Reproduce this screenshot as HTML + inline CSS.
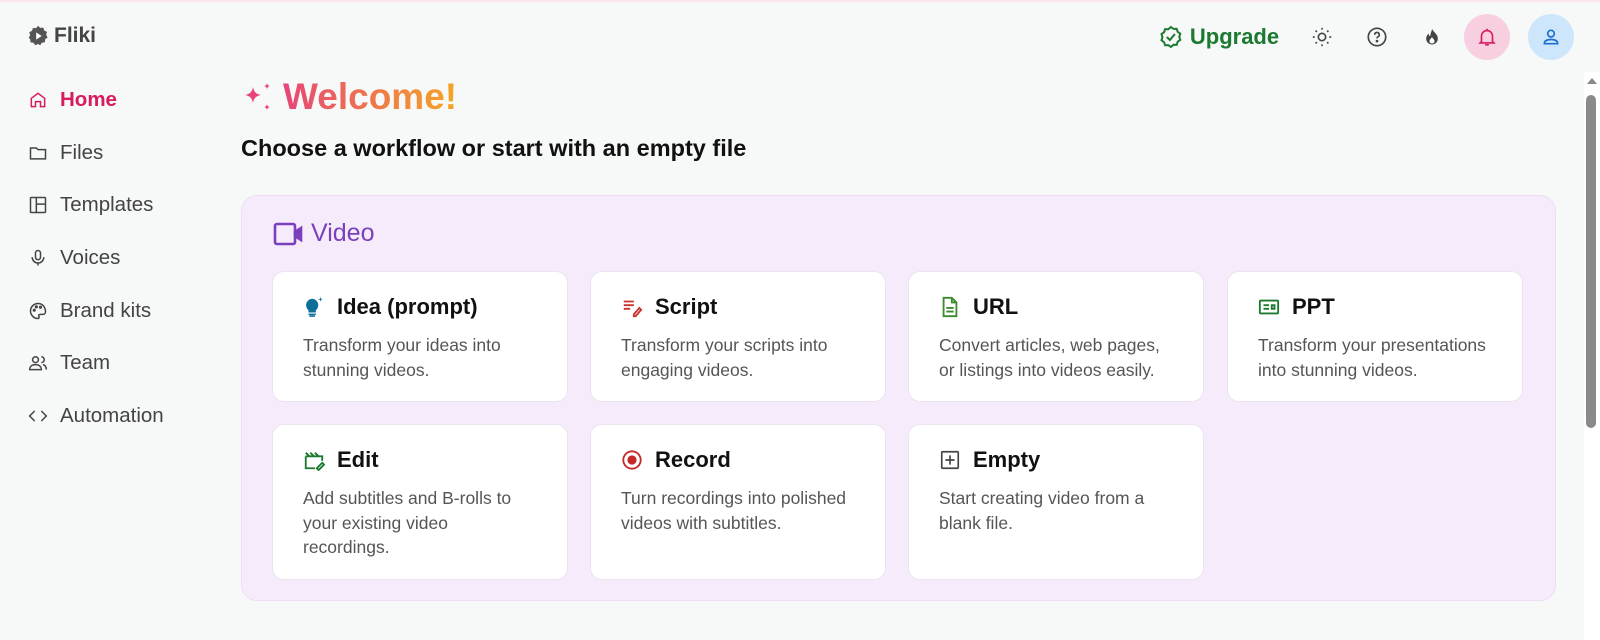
<!DOCTYPE html>
<html><head><style>
*{box-sizing:border-box;margin:0;padding:0}
body{width:1600px;height:640px;background:#f7f8f8;font-family:"Liberation Sans",sans-serif;position:relative;overflow:hidden;color:#222}
.topline{position:absolute;top:0;left:0;right:0;height:2px;background:#fbe4ee}
.logo{position:absolute;left:27px;top:24px;font-size:21px;font-weight:bold;color:#444;display:flex;align-items:center;gap:5px}
.nav{position:absolute;left:28px;top:74px}
.nav div{height:52.6px;display:flex;align-items:center;gap:12px;font-size:20.5px;color:#444}
.nav div.act{color:#d81b60;font-weight:bold}
.nav svg{width:20px;height:20px;fill:none;stroke:currentColor;stroke-width:1.8}
.welcome{position:absolute;left:243px;top:76px;display:flex;align-items:center;gap:8px;font-size:37px;font-weight:bold}
.welcome span{background:linear-gradient(90deg,#e64677,#f5a623);-webkit-background-clip:text;color:transparent}
.sub{position:absolute;left:241px;top:135px;font-size:23.5px;font-weight:bold;color:#111}
.panel{position:absolute;left:241px;top:195px;width:1315px;height:406px;background:#f5ebfb;border:1px solid #ecdff5;border-radius:16px}
.vt{position:absolute;left:273px;top:219px;font-size:25px;color:#7b3fbd;display:flex;align-items:center;gap:8px}
.card{position:absolute;width:296px;background:#fff;border:1px solid #ebe4ef;border-radius:12px;padding:22px 30px}
.card h3{font-size:22px;font-weight:bold;color:#111;display:flex;align-items:center;gap:12px;margin-bottom:13px}
.card p{font-size:17.5px;color:#555;line-height:24.5px}
.card svg{width:22px;height:22px;flex:none}
.top{position:absolute;top:37px;transform:translate(-50%,-50%);display:flex;align-items:center;justify-content:center}
.circ{width:46px;height:46px;border-radius:50%}
</style></head><body>
<div class="topline"></div>
<div class="logo"><svg width="22" height="22" viewBox="0 0 24 24"><path d="M12 1l2.5 2.2 3.3-.4 1 3.2 3 1.5-.9 3.2 1.6 2.9-2.7 1.9-.3 3.3-3.3.5-1.8 2.8-2.4-1.4-3 1.4-1.9-2.8-3.3-.4-.3-3.3L1.9 14l1.5-3L2.5 7.8l3-1.5 1-3.2 3.3.5z" fill="#555"/><path d="M10 8v8l6-4z" fill="#fff"/></svg>Fliki</div>
<div class="nav">
<div class="act"><svg viewBox="0 0 24 24"><path d="M4 10l8-6 8 6v10h-5v-6h-6v6H4z"/></svg>Home</div>
<div><svg viewBox="0 0 24 24"><path d="M3 6h7l2 2h9v11H3z"/></svg>Files</div>
<div><svg viewBox="0 0 24 24"><rect x="3" y="3" width="18" height="18" rx="1"/><path d="M10 3v18M10 11h11"/></svg>Templates</div>
<div><svg viewBox="0 0 24 24"><rect x="9" y="3" width="6" height="11" rx="3"/><path d="M5 11a7 7 0 0014 0M12 18v3"/></svg>Voices</div>
<div><svg viewBox="0 0 24 24"><path d="M12 3a9 9 0 000 18c1.5 0 1.5-2 1-3s0-2 2-2h3a3 3 0 003-3c0-6-4-10-9-10z"/><circle cx="7.5" cy="11" r="1"/><circle cx="10" cy="7" r="1"/><circle cx="15" cy="7.5" r="1"/></svg>Brand kits</div>
<div><svg viewBox="0 0 24 24"><circle cx="9" cy="8" r="3.5"/><path d="M2 20c0-4 3-6 7-6s7 2 7 6zM16 4.5a3.5 3.5 0 010 7M18 14c2.5.5 4 2.5 4 6"/></svg>Team</div>
<div><svg viewBox="0 0 24 24"><path d="M8 6l-6 6 6 6M16 6l6 6-6 6"/></svg>Automation</div>
</div>
<div class="top" style="left:1219px;font-size:22px;font-weight:bold;color:#1b7a2f;gap:7px"><svg width="24" height="24" viewBox="0 0 24 24" fill="none" stroke="#1b7a2f" stroke-width="2"><path d="M12 2l2.6 1.9 3.2-.1 1 3 2.6 1.9-1 3.1 1 3.1-2.6 1.9-1 3-3.2-.1L12 22l-2.6-1.9-3.2.1-1-3-2.6-1.9 1-3.1-1-3.1 2.6-1.9 1-3 3.2.1z"/><path d="M8 12l3 3 5-6"/></svg>Upgrade</div>
<div class="top" style="left:1322px"><svg width="22" height="22" viewBox="0 0 24 24" fill="none" stroke="#444" stroke-width="1.8"><circle cx="12" cy="12" r="4"/><path d="M12 2v2M12 20v2M2 12h2M20 12h2M5 5l1.4 1.4M17.6 17.6L19 19M5 19l1.4-1.4M17.6 6.4L19 5"/></svg></div>
<div class="top" style="left:1377px"><svg width="22" height="22" viewBox="0 0 24 24" fill="none" stroke="#444" stroke-width="1.8"><circle cx="12" cy="12" r="9.5"/><path d="M9.5 9.5a2.5 2.5 0 113.5 2.3c-.8.4-1 1-1 1.7"/><circle cx="12" cy="16.5" r=".6" fill="#444"/></svg></div>
<div class="top" style="left:1432px"><svg width="20" height="22" viewBox="0 0 24 24"><path d="M12 2c1 4 7 6 7 12a7 7 0 01-14 0c0-3 2-5 3-6 0 2 1 3 2 3 0-4 2-6 2-9z" fill="#444"/><path d="M12 20a3 3 0 01-3-3c0-2 2-3 3-5 1 2 3 3 3 5a3 3 0 01-3 3z" fill="#fff"/></svg></div>
<div class="top circ" style="left:1487px;background:#f8cfe0"><svg width="22" height="22" viewBox="0 0 24 24" fill="none" stroke="#d81b60" stroke-width="1.8"><path d="M6 17V11a6 6 0 0112 0v6l1.5 1.5h-15zM10 20.5h4M12 3v2"/></svg></div>
<div class="top circ" style="left:1551px;background:#cde6fb"><svg width="20" height="20" viewBox="0 0 24 24" fill="none" stroke="#1a6fd1" stroke-width="2"><circle cx="12" cy="8" r="4"/><path d="M4 20c0-4 4-5 8-5s8 1 8 5z"/></svg></div>
<div style="position:absolute;left:1584px;top:72px;width:16px;height:568px;background:#fff"></div>
<div style="position:absolute;left:1587px;top:78px;border:5px solid transparent;border-bottom:6px solid #888;border-top:0"></div>
<div style="position:absolute;left:1586px;top:95px;width:10px;height:333px;background:#8a8a8a;border-radius:5px"></div>

<div class="welcome"><svg width="32" height="32" viewBox="0 0 32 32"><path d="M10 6c1 5 3 7 8 8-5 1-7 3-8 8-1-5-3-7-8-8 5-1 7-3 8-8z" fill="#e8437a"/><path d="M24 2c.4 2 1.2 2.8 3 3-1.8.4-2.6 1.2-3 3-.4-1.8-1.2-2.6-3-3 1.8-.2 2.6-1 3-3zM24 23c.4 2 1.2 2.8 3 3-1.8.4-2.6 1.2-3 3-.4-1.8-1.2-2.6-3-3 1.8-.2 2.6-1 3-3z" fill="#e8437a"/></svg><span>Welcome!</span></div>
<div class="sub">Choose a workflow or start with an empty file</div>
<div class="panel"></div>
<div class="vt"><svg width="30" height="26" viewBox="0 0 30 26" fill="none" stroke="#7b3fbd" stroke-width="2.6"><rect x="2" y="3" width="20" height="20" rx="2"/><path d="M22 11l6-4v12l-6-4z" fill="#7b3fbd"/></svg>Video</div>

<div class="card" style="left:272px;top:271px;height:131px"><h3><svg viewBox="0 0 24 24"><path d="M10 3a7 7 0 00-4 12.5V18h8v-2.5A7 7 0 0010 3z" fill="#0e6f99"/><path d="M6 20h8M7 22h6" stroke="#0e6f99" stroke-width="1.6"/><path d="M19 1l.6 2 2 .6-2 .6-.6 2-.6-2-2-.6 2-.6z" fill="#0e6f99"/></svg>Idea (prompt)</h3><p>Transform your ideas into stunning videos.</p></div>
<div class="card" style="left:590px;top:271px;height:131px"><h3><svg viewBox="0 0 24 24" fill="none" stroke="#c9302c" stroke-width="2"><path d="M3 6h11M3 10h11M3 14h7M14 20l6-7 2 2-6 7h-2z"/></svg>Script</h3><p>Transform your scripts into engaging videos.</p></div>
<div class="card" style="left:908px;top:271px;height:131px"><h3><svg viewBox="0 0 24 24" fill="none" stroke="#3b8a2e" stroke-width="2"><path d="M5 2h9l5 5v15H5zM14 2v5h5M8 13h8M8 17h8"/></svg>URL</h3><p>Convert articles, web pages, or listings into videos easily.</p></div>
<div class="card" style="left:1227px;top:271px;height:131px"><h3><svg viewBox="0 0 24 24" fill="none" stroke="#1b7a2f" stroke-width="2"><rect x="2" y="5" width="20" height="14" rx="1"/><path d="M6 10h6M6 14h6M15 10h3v4h-3z"/></svg>PPT</h3><p>Transform your presentations into stunning videos.</p></div>
<div class="card" style="left:272px;top:424px;height:156px"><h3><svg viewBox="0 0 24 24" fill="none" stroke="#1b7a2f" stroke-width="2"><path d="M3 8v13h10M3 8h18v5M3 4l4 4M8 4l4 4M13 4l4 4M15 21l6-6 2 2-6 6z"/></svg>Edit</h3><p>Add subtitles and B-rolls to your existing video recordings.</p></div>
<div class="card" style="left:590px;top:424px;height:156px"><h3><svg viewBox="0 0 24 24"><circle cx="12" cy="12" r="9.5" fill="none" stroke="#c62828" stroke-width="2"/><circle cx="12" cy="12" r="5" fill="#c62828"/></svg>Record</h3><p>Turn recordings into polished videos with subtitles.</p></div>
<div class="card" style="left:908px;top:424px;height:156px"><h3><svg viewBox="0 0 24 24" fill="none" stroke="#444" stroke-width="1.8"><rect x="3" y="3" width="18" height="18" rx="1"/><path d="M12 7v10M7 12h10"/></svg>Empty</h3><p>Start creating video from a blank file.</p></div>
</body></html>
